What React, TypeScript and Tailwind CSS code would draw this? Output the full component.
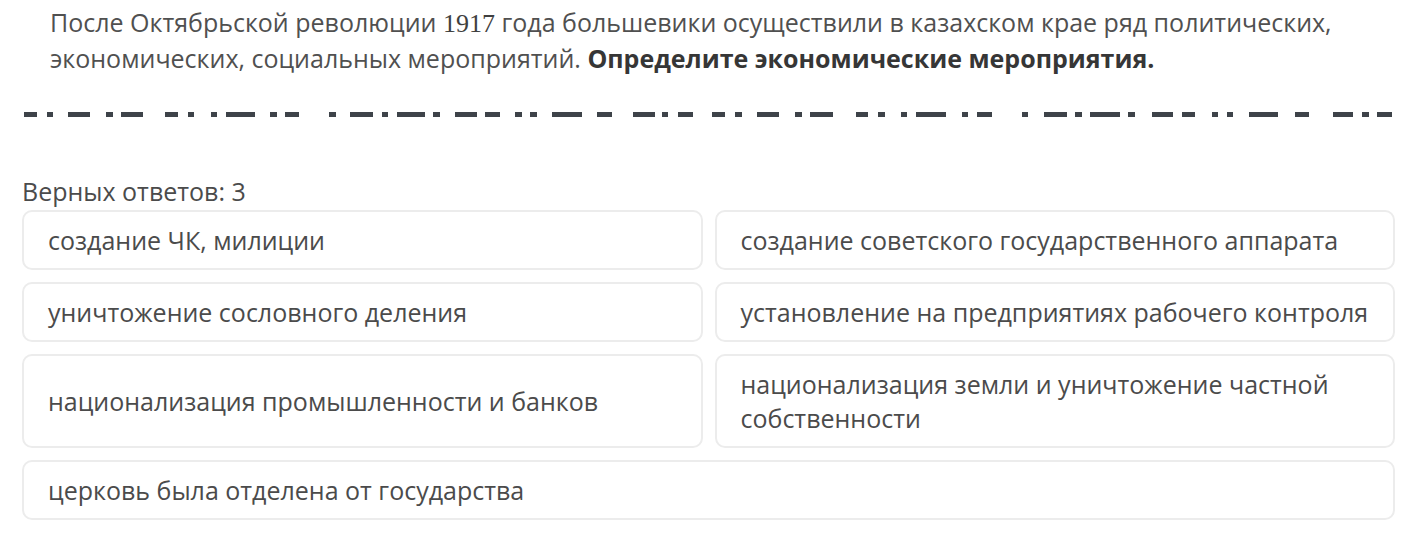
import React from "react";

// blank segments of the hidden answer line, [x, width]
const blanks: [number, number][] = [
    [24, 13], [47, 6], [68, 22], [106, 7], [121, 22], [165, 13], [188, 6], [211, 6], [226, 29], [270, 7], [285, 14],
    [329, 7], [350, 23], [382, 6], [397, 28], [433, 7], [455, 22], [485, 15], [515, 7], [530, 7], [552, 30], [597, 15],
    [633, 22], [662, 6], [678, 15],
    [712, 13], [735, 7], [757, 22], [795, 7], [810, 23], [856, 12], [878, 7], [901, 6], [916, 30], [962, 6], [977, 15],
    [1022, 6], [1044, 23], [1075, 7], [1090, 30], [1128, 7], [1152, 21], [1182, 13], [1212, 6], [1227, 6], [1249, 29],
    [1295, 14], [1333, 20], [1362, 7], [1377, 15],
];

const answers = [
    "создание ЧК, милиции",
    "создание советского государственного аппарата",
    "уничтожение сословного деления",
    "установление на предприятиях рабочего контроля",
    "национализация промышленности и банков",
    "национализация земли и уничтожение частной собственности",
];

const AnswerCard: React.FC<{ text: string; wide?: boolean }> = ({ text, wide }) => (
    <div
        className={`flex items-center rounded-[10px] border-2 border-[#ececec] bg-white pl-[24px] pr-4 py-[11px] ${wide ? "col-span-2" : ""}`}
    >
        <span className="text-[25px] leading-[34px] text-[#4b4b4b]">{text}</span>
    </div>
);

export default function App() {
    return (
        <div className="w-[1409px] h-[536px] bg-white overflow-hidden" style={{ fontFamily: '"Open Sans", "Noto Sans", sans-serif' }}>
            <p className="pl-[50px] pt-[5px] w-[1390px] text-[25px] leading-[35px] text-[#505050]">
                После Октябрьской революции <span className="font-['Liberation_Serif',serif] text-[26px] text-[#3f3f3f]">1917</span> года большевики
                осуществили в казахском крае ряд политических, экономических, социальных мероприятий.{" "}
                <span className="font-bold text-[#363636]">Определите экономические мероприятия.</span>
            </p>

            <svg className="mt-[34px] block" width="1409" height="8" viewBox="0 0 1409 8">
                {blanks.map(([x, w]) => (
                    <rect key={x} x={x} y={2} width={w} height={5} fill="#3e4349" />
                ))}
            </svg>

            <div className="mt-[58px] pl-[22px] pr-[14px]">
                <div className="text-[25px] leading-[30px] text-[#4b4b4b]">Верных ответов: 3</div>
                <div className="mt-[4px] grid grid-cols-2 gap-x-[12px] gap-y-[12px]">
                    {answers.map((a) => (
                        <AnswerCard key={a} text={a} />
                    ))}
                    <AnswerCard text="церковь была отделена от государства" wide />
                </div>
            </div>
        </div>
    );
}
